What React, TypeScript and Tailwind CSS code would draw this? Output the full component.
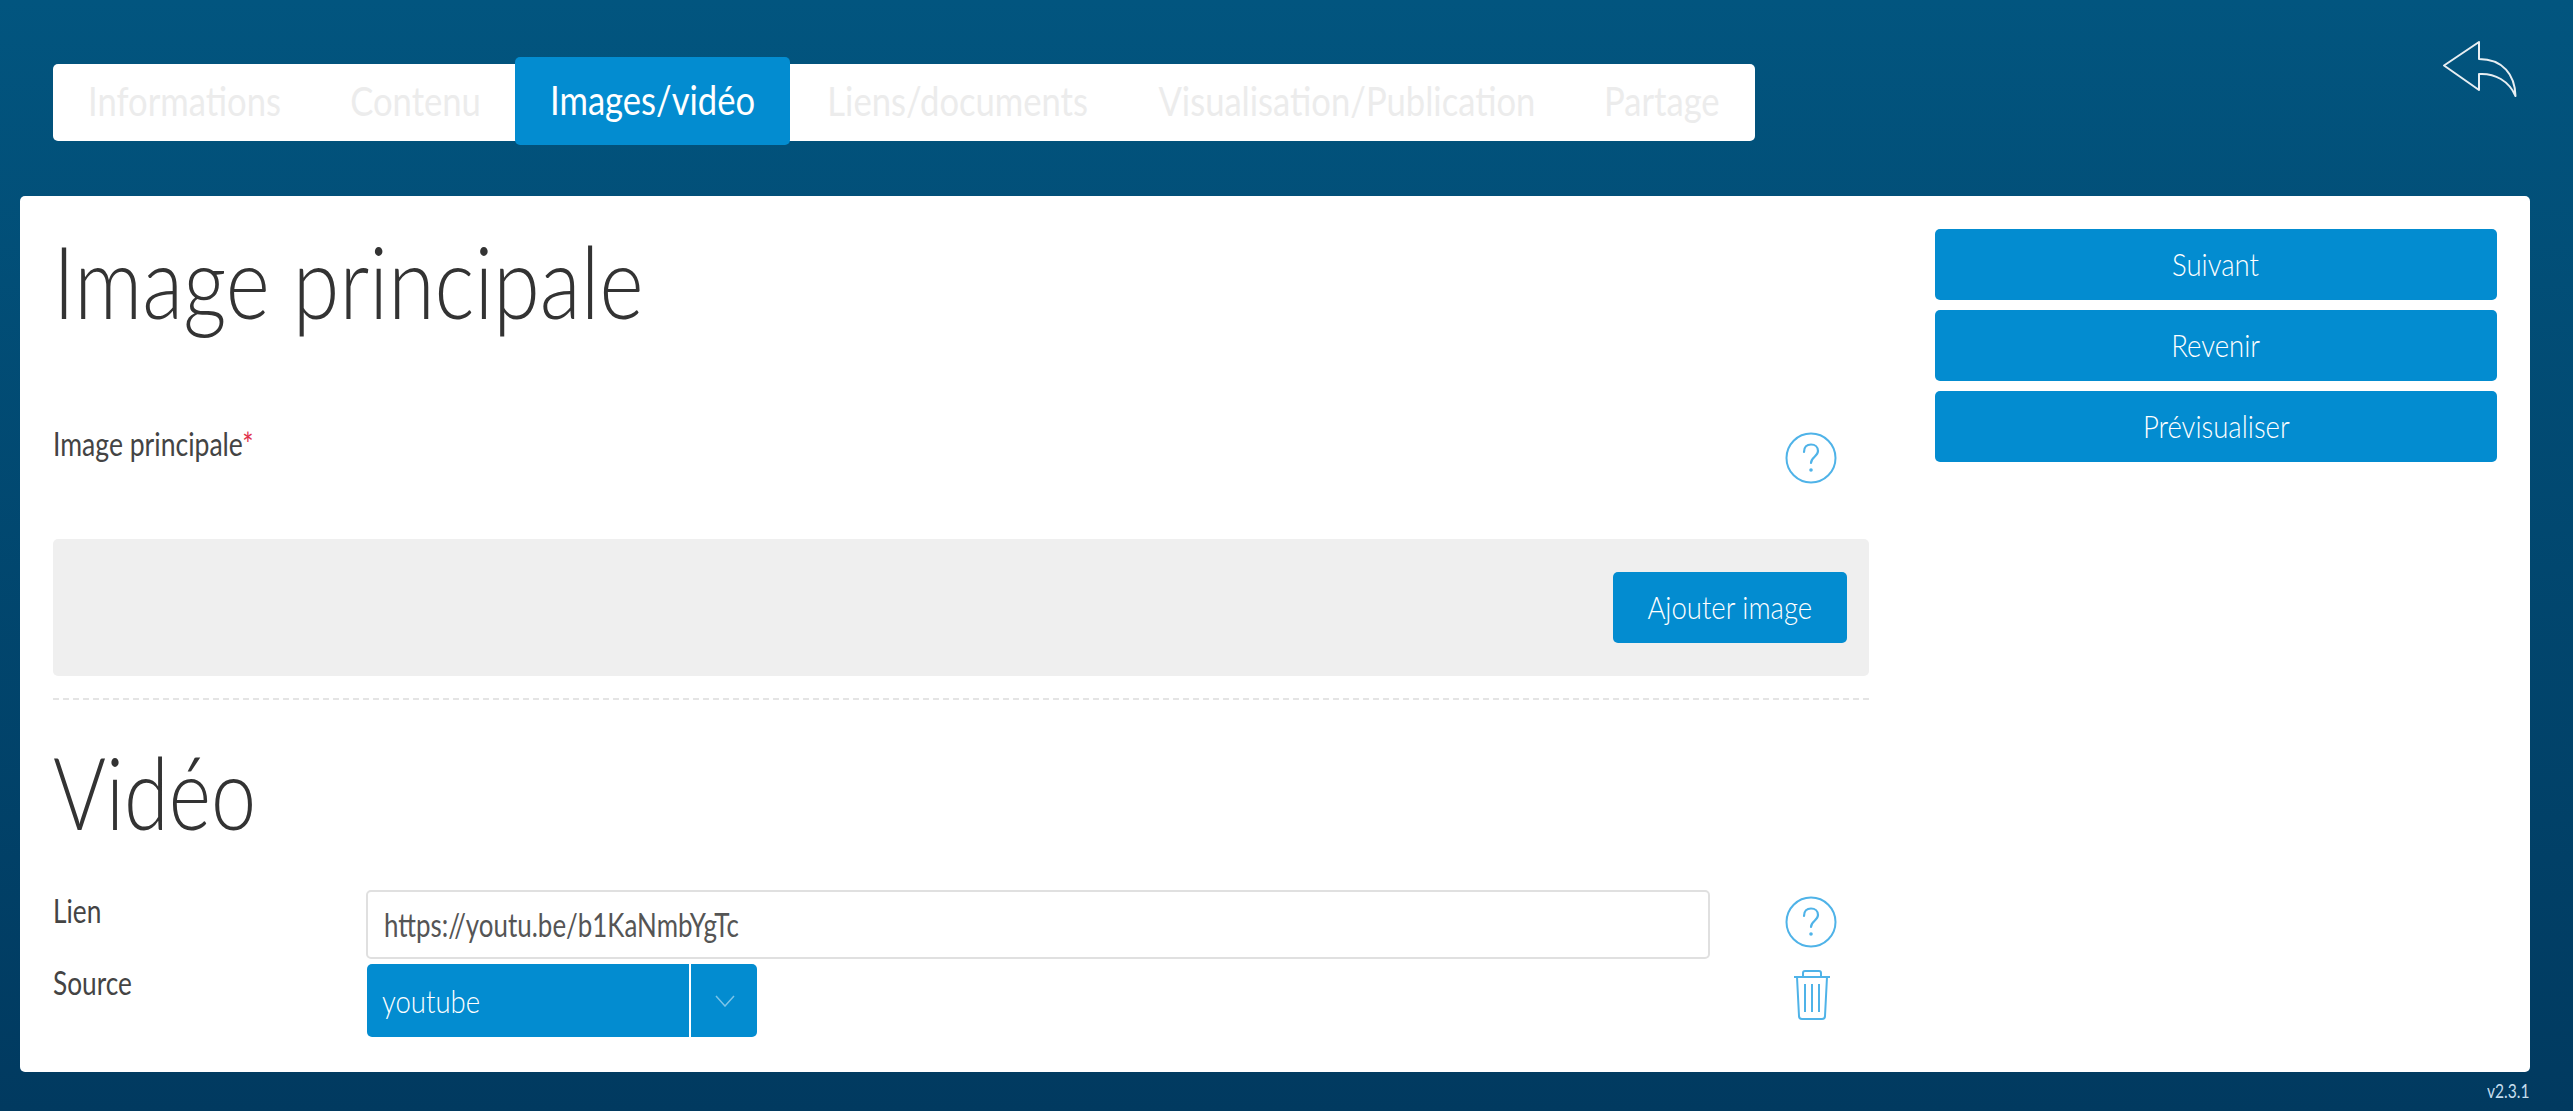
const tabs = [
  { label: 'Informations', width: 'w-[263px]', active: false },
  { label: 'Contenu', width: 'w-[199px]', active: false },
  { label: 'Images/vidéo', width: 'w-[275px]', active: true },
  { label: 'Liens/documents', width: 'w-[336px]', active: false },
  { label: 'Visualisation/Publication', width: 'w-[442px]', active: false },
  { label: 'Partage', width: 'w-[187px]', active: false },
];

function HelpIcon() {
  return (
    <svg width="52" height="52" viewBox="0 0 52 52" fill="none" className="text-[#4fb3e8]">
      <circle cx="26" cy="26" r="24.5" stroke="currentColor" strokeWidth="2" />
      <path d="M19 20c0-5 3-7.500 7-7.500s7 2.500 7 6.500c0 5.500-7 6-7 12" stroke="currentColor" strokeWidth="2.200" strokeLinecap="round" />
      <circle cx="26" cy="38" r="1.800" fill="currentColor" />
    </svg>
  );
}

function TrashIcon() {
  return (
    <svg width="38" height="50" viewBox="0 0 38 50" fill="none" stroke="#4fb3e8" strokeWidth="2">
      <path d="M1 7h36" />
      <path d="M10 7V3q0-2 2-2h14q2 0 2 2v4" />
      <path d="M4 7l2 39q0 3 3 3h20q3 0 3-3l2-39" />
      <path d="M12 14v28M19 14v28M26 14v28" />
    </svg>
  );
}

function BackIcon() {
  return (
    <svg width="74" height="57" viewBox="0 0 74 57" fill="none" stroke="#e8eef2" strokeWidth="2" strokeLinejoin="round">
      <path d="M1 24.500L36 1v17c24 0 36 16 36.500 37C66 40 52 32 36 33v16z" />
    </svg>
  );
}

function BlueButton({ label, className }: { label: string; className: string }) {
  return (
    <button className={`flex items-center justify-center rounded-[5px] bg-[#038cd0] pb-[2px] text-[32px] font-light text-white ${className}`}>
      <span className="inline-block scale-x-[0.86]">{label}</span>
    </button>
  );
}

export default function App() {
  return (
    <div className="flex h-[1111px] w-[2573px] flex-col overflow-hidden bg-gradient-to-b from-[#02557f] to-[#013a60] font-['Lato',sans-serif]">
      <header className="flex h-[196px] shrink-0 justify-between pl-[53px] pr-[56px]">
        <nav className="mt-[64px] flex h-[77px] w-[1702px] items-center rounded-[5px] bg-white">
          {tabs.map((tab) => (
            <a
              key={tab.label}
              className={`flex items-center justify-center pb-[3px] text-[40px] ${tab.width} ${
                tab.active ? '-mt-[3px] h-[88px] rounded-[5px] bg-[#038cd0] text-white' : 'text-[#ececec]'
              }`}
            >
              <span className="inline-block scale-x-[0.865] whitespace-nowrap">{tab.label}</span>
            </a>
          ))}
        </nav>
        <div className="mt-[41px]">
          <BackIcon />
        </div>
      </header>

      <main className="ml-[20px] flex h-[876px] w-[2510px] shrink-0 rounded-[5px] bg-white">
        <section className="ml-[33px] w-[1816px] shrink-0 text-[#444]">
          <h1 className="flex h-[224px] items-start pt-[24px] text-[100px] leading-[120px] font-light text-[#333]">
            <span className="inline-block origin-left scale-x-[0.845]">Image principale</span>
          </h1>
          <div className="flex h-[119px] justify-between pr-[32px]">
            <label className="text-[32px] leading-[48px]">
              <span className="inline-block origin-left scale-x-[0.83] whitespace-nowrap">
                Image principale<span className="text-[#e0314b]">*</span>
              </span>
            </label>
            <div className="pt-[12px]">
              <HelpIcon />
            </div>
          </div>
          <div className="flex h-[137px] items-center justify-end rounded-[5px] bg-[#efefef] pr-[22px]">
            <BlueButton label="Ajouter image" className="h-[71px] w-[234px]" />
          </div>
          <div className="mt-[22px] border-b-2 border-dashed border-[#e4e4e4]" />
          <h2 className="flex h-[190px] items-start pt-[31px] text-[100px] leading-[120px] font-light text-[#333]">
            <span className="inline-block origin-left scale-x-[0.81]">Vidéo</span>
          </h2>
          <div className="grid grid-cols-[313px_1344px_1fr] items-start">
            <label className="-mt-[3px] text-[32px] leading-[48px]">
              <span className="inline-block origin-left scale-x-[0.82]">Lien</span>
            </label>
            <div className="flex h-[69px] items-center rounded-[5px] border-2 border-[#e0e0e0] pl-[16px] text-[32px] text-[#555]">
              <span className="inline-block origin-left scale-x-[0.81] whitespace-nowrap">https://youtu.be/b1KaNmbYgTc</span>
            </div>
            <div className="flex justify-end pr-[32px] pt-[6px]">
              <HelpIcon />
            </div>
            <label className="text-[32px] leading-[48px]">
              <span className="inline-block origin-left scale-x-[0.82]">Source</span>
            </label>
            <div className="ml-[1px] mt-[5px] flex h-[73px] w-[390px] rounded-[5px] bg-[#038cd0] text-[32px] font-light text-white">
              <div className="flex w-[324px] items-center border-r-2 border-white pl-[15px]">
                <span className="inline-block origin-left scale-x-[0.86]">youtube</span>
              </div>
              <div className="flex flex-1 items-center justify-center pl-[2px]">
                <svg width="20" height="12" viewBox="0 0 20 12" fill="none" stroke="#7cc4e8" strokeWidth="1.500">
                  <path d="M1 1l9 10 9-10" />
                </svg>
              </div>
            </div>
            <div className="flex justify-end pr-[38px] pt-[11px]">
              <TrashIcon />
            </div>
          </div>
        </section>

        <aside className="ml-[66px] flex w-[562px] flex-col gap-[10px] pt-[33px]">
          <BlueButton label="Suivant" className="h-[71px] w-full" />
          <BlueButton label="Revenir" className="h-[71px] w-full" />
          <BlueButton label="Prévisualiser" className="h-[71px] w-full" />
        </aside>
      </main>

      <footer className="flex justify-end pr-[43px] pt-[4px] text-[20px] leading-[28px] text-[#c5deee]">
        <span className="inline-block origin-right scale-x-[0.78]">v2.3.1</span>
      </footer>
    </div>
  );
}
